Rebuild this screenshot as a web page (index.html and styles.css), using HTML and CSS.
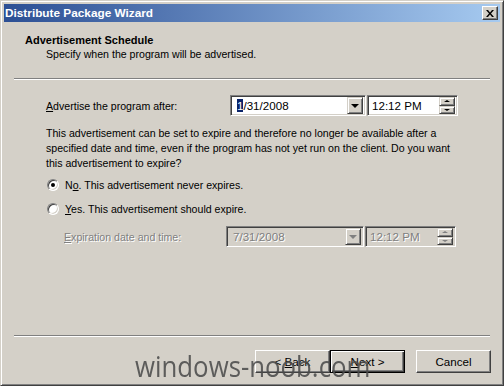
FILE: index.html
```html
<!DOCTYPE html>
<html lang="en">
<head>
    <meta charset="UTF-8">
    <title>Distribute Package Wizard</title>
    <link rel="stylesheet" href="styles.css">
</head>
<body>
    <div class="window">
        <!-- Title Bar -->
        <div class="titlebar">
            <span class="title">Distribute Package Wizard</span>
            <span class="close-btn">
                <svg width="8" height="7" viewBox="0 0 8 7"><path d="M0 0h2l2 2.5L6 0h2L5 3.5 8 7H6L4 4.5 2 7H0l3-3.5z" fill="#000"/></svg>
            </span>
        </div>

        <!-- Page Header -->
        <div class="header">
            <div class="header-title">Advertisement Schedule</div>
            <div class="header-sub">Specify when the program will be advertised.</div>
        </div>
        <div class="separator"></div>

        <!-- Main Content -->
        <div class="content">
            <div class="field-row">
                <span class="field-label"><u>A</u>dvertise the program after:</span>
                <div class="date-box">
                    <span class="value"><span class="selected">1</span>/31/2008</span>
                    <span class="drop-btn"><span class="arrow-down"></span></span>
                </div>
                <div class="time-box">
                    <span class="value">12:12 PM</span>
                    <span class="spinner">
                        <span class="spin-btn"><span class="arrow-up small"></span></span>
                        <span class="spin-btn"><span class="arrow-down small"></span></span>
                    </span>
                </div>
            </div>

            <p class="description">This advertisement can be set to expire and therefore no longer be available after a<br>specified date and time, even if the program has not yet run on the client. Do you want<br>this advertisement to expire?</p>

            <div class="radio-row">
                <span class="radio checked"></span>
                <span>N<u>o</u>. This advertisement never expires.</span>
            </div>
            <div class="radio-row">
                <span class="radio"></span>
                <span><u>Y</u>es. This advertisement should expire.</span>
            </div>

            <div class="field-row expire-row disabled">
                <span class="field-label expire-label"><u>E</u>xpiration date and time:</span>
                <div class="date-box">
                    <span class="value">7/31/2008</span>
                    <span class="drop-btn"><span class="arrow-down"></span></span>
                </div>
                <div class="time-box">
                    <span class="value">12:12 PM</span>
                    <span class="spinner">
                        <span class="spin-btn"><span class="arrow-up small"></span></span>
                        <span class="spin-btn"><span class="arrow-down small"></span></span>
                    </span>
                </div>
            </div>
        </div>

        <div class="separator"></div>

        <!-- Wizard Buttons -->
        <div class="button-bar">
            <button class="win-btn">&lt; <u>B</u>ack</button>
            <button class="win-btn default"><u>N</u>ext &gt;</button>
            <button class="win-btn cancel">Cancel</button>
        </div>
    </div>

    <!-- Watermark -->
    <div class="watermark">windows-noob.com</div>
</body>
</html>
```

FILE: styles.css
```css
/* General Page Styling */
body {
    margin: 0;
    width: 504px;
    height: 386px;
    background-color: #d4d0c8;
    font-family: "Liberation Sans", Arial, sans-serif;
    font-size: 10.6px;
    color: #000;
    overflow: hidden;
    position: relative;
}

u {
    text-decoration: underline;
}

/* Dialog Frame */
.window {
    box-sizing: border-box;
    width: 504px;
    height: 386px;
    display: flex;
    flex-direction: column;
    border: 1px solid;
    border-color: #d4d0c8 #404040 #404040 #d4d0c8;
    box-shadow: inset 1px 1px #fff, inset -1px -1px #808080;
    padding: 3px;
}

/* Title Bar */
.titlebar {
    height: 18px;
    display: flex;
    align-items: center;
    justify-content: space-between;
    padding: 0 2px 0 1px;
    background: linear-gradient(to right, #2c4f94, #a6caf0);
}

.title {
    color: #fff;
    font-weight: bold;
    font-size: 11.8px;
}

.close-btn {
    box-sizing: border-box;
    width: 16px;
    height: 14px;
    display: flex;
    align-items: center;
    justify-content: center;
    background: #d4d0c8;
    border: 1px solid;
    border-color: #fff #404040 #404040 #fff;
    box-shadow: inset -1px -1px #808080;
}

/* Header */
.header {
    padding: 11px 0 0 21px;
    height: 45px;
}

.header-title {
    font-weight: bold;
    font-size: 11px;
    line-height: 14px;
}

.header-sub {
    line-height: 14px;
    padding-left: 21px;
}

.separator {
    height: 1px;
    margin: 0 10px;
    background: #808080;
    border-bottom: 1px solid #fff;
}

/* Content */
.content {
    flex: 1;
    padding: 15px 0 0 42px;
}

.field-row {
    display: flex;
    align-items: center;
    height: 21px;
}

.field-label {
    width: 184px;
}

.date-box,
.time-box {
    box-sizing: border-box;
    height: 21px;
    display: flex;
    align-items: center;
    background: #fff;
    border: 1px solid;
    border-color: #808080 #fff #fff #808080;
    box-shadow: inset 1px 1px #404040, inset -1px -1px #d4d0c8;
    padding: 2px;
}

.date-box {
    width: 136px;
}

.time-box {
    width: 91px;
    margin-left: 1px;
}

.value {
    flex: 1;
    padding-left: 4px;
    font-size: 11.6px;
}

.time-box .value {
    padding-left: 2px;
}

.selected {
    background: #0a246a;
    color: #fff;
}

.drop-btn {
    box-sizing: border-box;
    width: 16px;
    height: 17px;
    display: flex;
    align-items: center;
    justify-content: center;
    background: #d4d0c8;
    border: 1px solid;
    border-color: #d4d0c8 #404040 #404040 #d4d0c8;
    box-shadow: inset 1px 1px #fff, inset -1px -1px #808080;
}

.arrow-down {
    width: 0;
    height: 0;
    border-left: 4px solid transparent;
    border-right: 4px solid transparent;
    border-top: 4px solid #000;
}

.arrow-up {
    width: 0;
    height: 0;
    border-left: 4px solid transparent;
    border-right: 4px solid transparent;
    border-bottom: 4px solid #000;
}

.arrow-down.small {
    border-width: 2px 3px 0 3px;
}

.arrow-up.small {
    border-width: 0 3px 2px 3px;
}

.spinner {
    display: flex;
    flex-direction: column;
    width: 16px;
    height: 17px;
}

.spin-btn {
    box-sizing: border-box;
    flex: 1;
    display: flex;
    align-items: center;
    justify-content: center;
    background: #d4d0c8;
    border: 1px solid;
    border-color: #d4d0c8 #404040 #404040 #d4d0c8;
    box-shadow: inset 1px 1px #fff, inset -1px -1px #808080;
}

/* Description */
.description {
    margin: 10px 0 0 0;
    line-height: 15px;
}

/* Radio Buttons */
.radio-row {
    display: flex;
    align-items: center;
    gap: 6px;
    height: 16px;
    margin-top: 6px;
}

.radio-row + .radio-row {
    margin-top: 8px;
}

.radio {
    box-sizing: border-box;
    width: 12px;
    height: 12px;
    margin-left: 1px;
    border-radius: 50%;
    background: #fff;
    border: 1px solid;
    border-color: #808080 #fff #fff #808080;
    box-shadow: inset 1px 1px #404040, inset -1px -1px #d4d0c8;
    display: flex;
    align-items: center;
    justify-content: center;
}

.radio.checked::after {
    content: "";
    width: 4px;
    height: 4px;
    border-radius: 50%;
    background: #000;
}

/* Disabled Expiration Row */
.expire-row {
    margin-top: 9px;
}

.expire-label {
    width: 162px;
    padding-left: 18px;
}

.disabled {
    color: #808080;
    text-shadow: 1px 1px #fff;
}

.disabled .date-box,
.disabled .time-box {
    background: #d4d0c8;
}

.disabled .date-box {
    width: 138px;
}

.disabled .arrow-down,
.disabled .arrow-up {
    border-top-color: #808080;
    border-bottom-color: #808080;
}

.disabled .arrow-up {
    border-top-color: transparent;
}

.disabled .arrow-down {
    border-bottom-color: transparent;
}

/* Buttons */
.button-bar {
    display: flex;
    padding: 13px 9px 9px 0;
    justify-content: flex-end;
    height: 23px;
}

.win-btn {
    box-sizing: border-box;
    width: 75px;
    height: 23px;
    padding: 0;
    font-family: "Liberation Sans", Arial, sans-serif;
    font-size: 11.6px;
    color: #000;
    background: #d4d0c8;
    border: 1px solid;
    border-color: #fff #404040 #404040 #fff;
    box-shadow: inset -1px -1px #808080;
}

.win-btn.default {
    border: 1px solid #000;
    box-shadow: inset 1px 1px #fff, inset -1px -1px #404040, inset -2px -2px #808080;
}

.win-btn.cancel {
    margin-left: 11px;
}

/* Watermark */
.watermark {
    position: absolute;
    left: 135px;
    top: 345px;
    font-family: "Open Sans", sans-serif;
    font-size: 30px;
    color: rgba(75, 75, 75, 0.88);
    transform: scaleX(0.86);
    transform-origin: left top;
    white-space: nowrap;
}
```
